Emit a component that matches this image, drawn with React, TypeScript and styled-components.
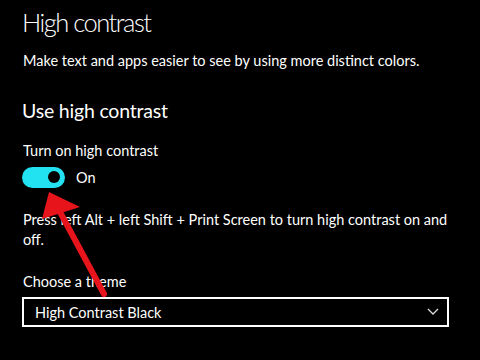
import React from "react";
import styled, { createGlobalStyle } from "styled-components";

const Global = createGlobalStyle`
  html, body { margin: 0; padding: 0; background: #000; }
  body { width: 480px; height: 360px; overflow: hidden; font-family: Lato, "Open Sans", sans-serif; color: #fff; }
`;

const Page = styled.div`
  position: relative;
  width: 480px;
  height: 360px;
  background: #000;
  padding: 4px 31px 0 22px;
  box-sizing: border-box;
  display: flex;
  flex-direction: column;
`;

const Title = styled.h1`
  margin: 0;
  font-size: 25.5px;
  font-weight: 300;
  line-height: 36px;
  letter-spacing: -1.5px;
`;

const Text = styled.p<{ $mt?: number }>`
  margin: ${(p) => p.$mt ?? 0}px 0 0 1px;
  font-size: 14.5px;
  line-height: 20px;
`;

const Heading = styled.h2`
  margin: 27px 0 0 0;
  font-size: 19.5px;
  font-weight: 400;
  line-height: 26px;
  letter-spacing: -0.2px;
`;

const ToggleRow = styled.div`
  display: flex;
  align-items: center;
  gap: 11px;
  margin: 6px 0 0 0;
  font-size: 14.5px;
`;

const Track = styled.div`
  width: 43px;
  height: 21px;
  border-radius: 11px;
  background: #22e2f2;
  position: relative;
`;

const Knob = styled.div`
  position: absolute;
  right: 5px;
  top: 4px;
  width: 12px;
  height: 12px;
  border-radius: 50%;
  background: #000;
`;

const Select = styled.div`
  margin: 5px 0 0 0;
  height: 30px;
  border: 2px solid #fff;
  box-sizing: border-box;
  display: flex;
  align-items: center;
  justify-content: space-between;
  padding: 0 8px 0 11px;
  font-size: 14.5px;
`;

const Arrow = styled.svg`
  position: absolute;
  left: 0;
  top: 0;
  pointer-events: none;
`;

export default function App() {
  return (
    <>
      <Global />
      <Page>
        <Title>High contrast</Title>
        <Text $mt={11}>Make text and apps easier to see by using more distinct colors.</Text>
        <Heading>Use high contrast</Heading>
        <Text $mt={17}>Turn on high contrast</Text>
        <ToggleRow>
          <Track>
            <Knob />
          </Track>
          <span>On</span>
        </ToggleRow>
        <Text $mt={22}>Press left Alt + left Shift + Print Screen to turn high contrast on and off.</Text>
        <Text $mt={22}>Choose a theme</Text>
        <Select>
          <span>High Contrast Black</span>
          <svg width="12" height="8" viewBox="0 0 12 8">
            <path d="M1 1 L6 6 L11 1" fill="none" stroke="#ddd" strokeWidth="1.3" />
          </svg>
        </Select>
        <Arrow width="480" height="360" viewBox="0 0 480 360">
          <line x1="104" y1="294" x2="60" y2="212" stroke="#e8141c" strokeWidth="6" strokeLinecap="round" />
          <polygon points="49,192 42,219 80,207" fill="#e8141c" />
        </Arrow>
      </Page>
    </>
  );
}
